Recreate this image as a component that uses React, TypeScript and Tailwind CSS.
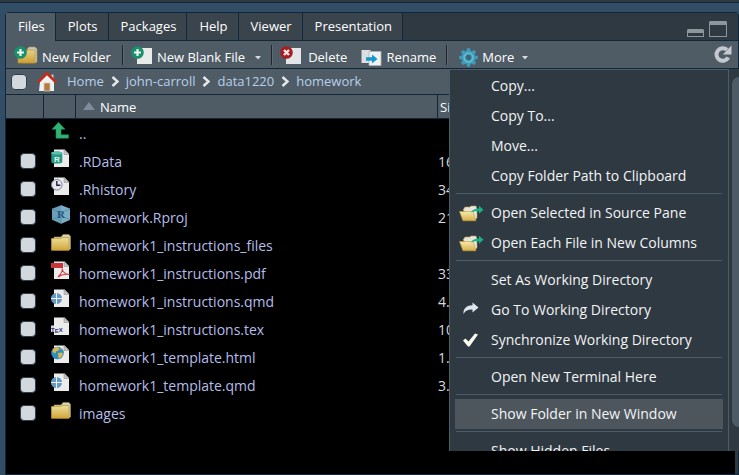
import type { ReactNode } from "react";

const Badge = () => (
  <g>
    <circle cx="6.500" cy="6.500" r="6.300" fill="#18906a" />
    <path d="M6.500 3v7M3 6.500h7" stroke="#eef6f2" strokeWidth="2.200" />
  </g>
);

const NewFolderIcon = () => (
  <svg width="24" height="20" viewBox="0 0 24 20" aria-hidden="true">
    <defs>
      <linearGradient id="nf" x1="0" y1="0" x2="0" y2="1">
        <stop offset="0" stopColor="#e6d38a" />
        <stop offset="1" stopColor="#cf9e30" />
      </linearGradient>
    </defs>
    <path d="M13 3.5l2-2.500h6l2 2V16l-2 1H8z" fill="#c9c6b4" stroke="#a89858" strokeWidth=".6" />
    <path d="M4 5h9l1-1h7v13H4z" fill="url(#nf)" stroke="#b8902c" strokeWidth=".6" />
    <Badge />
  </svg>
);

const NewFileIcon = () => (
  <svg width="22" height="20" viewBox="0 0 22 20" aria-hidden="true">
    <path d="M6 2h15v16H6z" fill="#e9eaea" />
    <Badge />
  </svg>
);

const DeleteIcon = () => (
  <svg width="22" height="20" viewBox="0 0 22 20" aria-hidden="true">
    <path d="M6 2h15v16H6z" fill="#e4e5e6" />
    <circle cx="6.500" cy="6.500" r="6.300" fill="#a51d22" />
    <path d="M4 4l5 5M9 4l-5 5" stroke="#f4e4e4" strokeWidth="2.400" />
  </svg>
);

const RenameIcon = () => (
  <svg width="21" height="18" viewBox="0 0 21 18" aria-hidden="true">
    <path d="M.5 1h9v13h-9z" fill="#dcdedf" />
    <path d="M8 2.500h12v14H8z" fill="#f0f1f1" stroke="#aeb4b9" strokeWidth=".8" />
    <path d="M5 8.300h6V5.500l5.500 4.500-5.500 4.500v-2.800H5z" fill="#1597cf" />
  </svg>
);

const GearIcon = () => (
  <svg width="19" height="19" viewBox="0 0 20 20" aria-hidden="true">
    <g fill="#3e9dbb">
      {[0, 45, 90, 135].map((a) => (
        <path key={a} d="M8.500 .2h3l.7 3v13.600l-.7 3h-3l-.7-3V3.200z" transform={`rotate(${a} 10 10)`} />
      ))}
      <circle cx="10" cy="10" r="7" />
    </g>
    <circle cx="10" cy="10" r="5.500" fill="#62b9d2" />
    <circle cx="10" cy="10" r="2.700" fill="#47606f" stroke="#2b7896" strokeWidth="1.200" />
  </svg>
);

const HomeIcon = () => (
  <svg width="20" height="20" viewBox="0 0 20 20" aria-hidden="true">
    <path d="M3 10l7-7 7 7v9H2z" fill="#eef0f2" />
    <path d="M14.500 2.500h2v5h-2z" fill="#c9ccd0" />
    <path d="M.8 10.500L10 1.300l9.200 9.200" fill="none" stroke="#cc2a16" strokeWidth="2.400" />
    <path d="M7 11h6v8H7z" fill="#b07c46" stroke="#d9c7ae" strokeWidth=".8" />
  </svg>
);

const RefreshIcon = () => (
  <svg width="18" height="19" viewBox="0 0 18 19" aria-hidden="true">
    <path d="M14.300 12.600A6.300 6.300 0 1 1 13 4.800" fill="none" stroke="#c3c9cf" strokeWidth="4" />
    <path d="M17.500 .5v9H8.800z" fill="#c3c9cf" />
  </svg>
);

const Chevron = () => (
  <svg width="9" height="11" viewBox="0 0 9 11" aria-hidden="true">
    <path d="M1.500 1l5 4.500-5 4.500" fill="none" stroke="#e4e8ec" strokeWidth="2.400" />
  </svg>
);

const Caret = () => (
  <svg width="6" height="4" viewBox="0 0 6 4" aria-hidden="true">
    <path d="M0 0h6L3 3.500z" fill="#d5dade" />
  </svg>
);

const MinimizeIcon = () => (
  <svg width="17" height="8" viewBox="0 0 17 8" aria-hidden="true">
    <path d="M1 0h15l1 1v7H0V1z" fill="#8b979c" />
    <path d="M1 4h15v3H1z" fill="#2f3941" />
  </svg>
);

const MaximizeIcon = () => (
  <svg width="18" height="16" viewBox="0 0 18 16" aria-hidden="true">
    <path d="M1 0h16l1 1v15H0V1z" fill="#8b979c" />
    <path d="M1 4h16v11H1z" fill="#2f3941" />
  </svg>
);

const UpIcon = () => (
  <svg width="18" height="17" viewBox="0 0 18 17" aria-hidden="true">
    <path d="M7.500 .3l6.500 7h-4v5.500h7.500v3.400H5V7.300H1z" fill="#2fb573" stroke="#1d8a55" strokeWidth=".6" />
  </svg>
);

const FolderIcon = () => (
  <svg width="20" height="17" viewBox="0 0 20 17" aria-hidden="true">
    <defs>
      <linearGradient id="fo" x1="0" y1="0" x2="0" y2="1">
        <stop offset="0" stopColor="#ecdf9a" />
        <stop offset="1" stopColor="#d2a53a" />
      </linearGradient>
    </defs>
    <path d="M3 3h7l2-2.500h6l1.500 2V15l-2 1H3z" fill="#d5d0b4" stroke="#9c9050" strokeWidth=".6" />
    <path d="M.4 4.500h9.200l1.400-1h7v12.800H.4z" fill="url(#fo)" stroke="#c2952c" strokeWidth=".7" />
  </svg>
);

const Page = ({ children }: { children?: ReactNode }) => (
  <svg width="20" height="19" viewBox="0 0 20 19" aria-hidden="true">
    <path d="M3 .5h10.500l4.500 4.500v13H3z" fill="#ececec" />
    <path d="M13 .5l5 5h-5z" fill="#c2c2c2" stroke="#8d8d8d" strokeWidth=".5" />
    {children}
  </svg>
);

const RDataIcon = () => (
  <Page>
    <path d="M.3 4c0-2 11-2 11 0v9c0 2-11 2-11 0z" fill="#259a86" />
    <ellipse cx="5.800" cy="4" rx="5.500" ry="1.500" fill="#5dbfae" />
    <text x="3" y="12.500" fontSize="8" fontWeight="700" fill="#e8f6f3" className="font-['Liberation_Sans',sans-serif]">R</text>
  </Page>
);

const HistoryIcon = () => (
  <Page>
    <circle cx="5.800" cy="7.800" r="5.300" fill="#e6e6f0" stroke="#84849a" strokeWidth="1" />
    <path d="M5.800 4v4.300h3.500" fill="none" stroke="#24243c" strokeWidth="1.400" />
  </Page>
);

const ProjIcon = () => (
  <svg width="20" height="19" viewBox="0 0 20 19" aria-hidden="true">
    <path d="M10 .3l9 3.500v11L10 18.700 1 14.800v-11z" fill="#6a9fb9" />
    <path d="M10 .3l9 3.500v11L10 18.700z" fill="#7badc4" />
    <path d="M1 4l9 3.500L19 4M10 7.500V18M1 14.500l9-3.500 9 3.500" fill="none" stroke="#5286a4" strokeWidth=".7" />
    <text x="6" y="12.500" fontSize="11" fontWeight="700" fill="#245780" className="font-['Liberation_Serif',serif]">R</text>
  </svg>
);

const PdfIcon = () => (
  <Page>
    <path d="M0 2h12v5H0z" fill="#c8343a" />
    <path d="M7 16c3-3 5-6 4-8.500M11 7.500c.5 3 3 5.500 7.500 6M7 16c3-2.500 7-3.300 11.500-2.500" fill="none" stroke="#cf3a40" strokeWidth="1.100" />
  </Page>
);

const QmdIcon = () => (
  <Page>
    <circle cx="5.500" cy="9.500" r="5.500" fill="#6699c4" />
    <path d="M5.500 4v11M0 9.500h11" stroke="#e9f0f6" strokeWidth="1" />
  </Page>
);

const TexIcon = () => (
  <Page>
    <path d="M0 8.500h3v6.500H0z" fill="#d4d4e2" />
    <text x="0" y="14.500" fontSize="6" fontWeight="700" fill="#33307e" className="font-['Liberation_Sans',sans-serif]">
      T<tspan dy="1.500">E</tspan><tspan dy="-1.500">X</tspan>
    </text>
  </Page>
);

const HtmlIcon = () => (
  <Page>
    <circle cx="6.500" cy="8" r="6.300" fill="#2a8fc0" />
    <path d="M2 4l3.500-2 3 1-1 2.500-2.500 1-.5 2L1.500 7zM7 8l4-.5 1 2-2.500 3.500-2 .8zM9 2.500l2 1.500-1 1.500z" fill="#e0b64c" />
  </Page>
);

const OpenFolderIcon = () => (
  <svg width="25" height="17" viewBox="0 0 25 17" aria-hidden="true">
    <defs>
      <linearGradient id="of" x1="0" y1="0" x2="0" y2="1">
        <stop offset="0" stopColor="#f6eab0" />
        <stop offset="1" stopColor="#d8b04a" />
      </linearGradient>
    </defs>
    <path d="M4 5l2-3h5l1-1h5l1 3v9l-3 2.500z" fill="#e8e6dc" stroke="#b89c48" strokeWidth=".6" />
    <path d="M.5 6.500H14l3 9.300H4z" fill="url(#of)" stroke="#c49a35" strokeWidth=".6" />
    <path d="M12 7.500c1.500-3 4-4 8-4V.8l4.500 4-4.500 4V6.300c-3-.3-5.500 0-8 1.200z" fill="#18b089" />
  </svg>
);

const GoIcon = () => (
  <svg width="16" height="17" viewBox="0 0 16 17" aria-hidden="true">
    <path d="M.5 12C0 6 4 3.200 9.500 3.200V.5l6 5-6 5V7.600C5.500 7.400 2.500 8.500.5 12z" fill="#dfe5ee" />
  </svg>
);

const CheckIcon = () => (
  <svg width="16" height="14" viewBox="0 0 16 14" aria-hidden="true">
    <path d="M0 7.500l2.500-2 3 3L12 .5l3 1L6.500 13.500H5z" fill="#fdfdf2" />
  </svg>
);

const tabs = ["Files", "Plots", "Packages", "Help", "Viewer", "Presentation"];
const crumbs = ["Home", "john-carroll", "data1220", "homework"];

const files = [
  { name: ".RData", size: "16 KB", icon: <RDataIcon /> },
  { name: ".Rhistory", size: "34 B", icon: <HistoryIcon /> },
  { name: "homework.Rproj", size: "218 B", icon: <ProjIcon /> },
  { name: "homework1_instructions_files", size: "", icon: <FolderIcon /> },
  { name: "homework1_instructions.pdf", size: "33 KB", icon: <PdfIcon /> },
  { name: "homework1_instructions.qmd", size: "4.1 KB", icon: <QmdIcon /> },
  { name: "homework1_instructions.tex", size: "10 KB", icon: <TexIcon /> },
  { name: "homework1_template.html", size: "1.2 MB", icon: <HtmlIcon /> },
  { name: "homework1_template.qmd", size: "3.1 KB", icon: <QmdIcon /> },
  { name: "images", size: "", icon: <FolderIcon /> },
];

type Item = { label: string; icon?: ReactNode; active?: boolean };
const menuGroups: Item[][] = [
  [{ label: "Copy..." }, { label: "Copy To..." }, { label: "Move..." }, { label: "Copy Folder Path to Clipboard" }],
  [
    { label: "Open Selected in Source Pane", icon: <OpenFolderIcon /> },
    { label: "Open Each File in New Columns", icon: <OpenFolderIcon /> },
  ],
  [
    { label: "Set As Working Directory" },
    { label: "Go To Working Directory", icon: <GoIcon /> },
    { label: "Synchronize Working Directory", icon: <CheckIcon /> },
  ],
  [{ label: "Open New Terminal Here" }],
  [{ label: "Show Folder in New Window", active: true }],
  [{ label: "Show Hidden Files" }],
];

const Check = ({ label }: { label: string }) => (
  <input
    type="checkbox"
    aria-label={label}
    className="block size-4 shrink-0 appearance-none rounded-sm border border-[#2c3f50] bg-[#d3d8dd]"
  />
);

const Divider = () => <div className="h-5 w-px shrink-0 self-start bg-[#1c252d] shadow-[1px_0_0_#5d6871]" />;

function MoreMenu() {
  return (
    <div className="absolute top-7 -right-px left-[443px] flex h-[382px] overflow-hidden border-l border-[#4c5c69] bg-[#2f3941]">
      <div role="menu" className="h-full flex-1 overflow-hidden border-t border-r border-[#4c5c69] px-[5px] pt-px">
        {menuGroups.map((group, g) => (
          <div key={g}>
            {g > 0 && <div role="separator" className="mx-px mt-0.5 mb-1 h-px bg-[#4c5c69]" />}
            {group.map((item) => (
              <button
                key={item.label}
                role="menuitem"
                className={`flex h-[30px] w-full items-center text-left text-sm whitespace-nowrap text-[#f2f4f5] ${item.active ? "bg-[#4e565d]" : ""}`}
              >
                <span className="flex w-9 shrink-0 items-center justify-center pr-1">{item.icon}</span>
                {item.label}
              </button>
            ))}
          </div>
        ))}
      </div>
      <div className="w-2.5 shrink-0 pt-2 pb-6 pl-[3px]">
        <div className="h-full rounded-l-lg bg-[#4d5b67]" />
      </div>
    </div>
  );
}

export default function App() {
  return (
    <div className="flex h-screen flex-col overflow-hidden bg-[#324d66] font-['Open_Sans','Noto_Sans',sans-serif] text-[13px] text-white">
      <div className="h-[3px] shrink-0 border-b border-[#12263a] bg-[#2f3941]" />
      <section className="mt-[9px] ml-[5px] flex min-h-0 flex-1 flex-col rounded-t border border-[#12263a] bg-black">
        <div className="flex h-7 shrink-0 items-stretch border-b border-[#12263a] bg-[#2f3941]">
          <div role="tablist" className="flex">
            {tabs.map((tab, i) => (
              <button
                key={tab}
                role="tab"
                aria-selected={i === 0}
                className={`border-r border-[#12263a] pr-2.5 pl-3 ${i === 0 ? "-mb-px bg-[#4f5c66]" : "bg-[#3a444c]"}`}
              >
                {tab}
              </button>
            ))}
          </div>
          <div className="ml-auto flex items-end gap-[5px] pr-[11px] pb-[3px]">
            <button aria-label="Minimize"><MinimizeIcon /></button>
            <button aria-label="Maximize"><MaximizeIcon /></button>
          </div>
        </div>

        <div className="relative z-10 flex h-7 shrink-0 items-center border-b border-[#12263a] bg-[#4f5c66] pl-2 whitespace-nowrap">
          <button className="flex items-center gap-1 pt-1.5">
            <span className="pb-1"><NewFolderIcon /></span>
            New Folder
          </button>
          <div className="ml-[11px]"><Divider /></div>
          <button className="ml-2 flex items-center gap-1 pt-1.5">
            <span className="pb-1"><NewFileIcon /></span>
            New Blank File
          </button>
          <button aria-label="New file options" className="ml-2.5 pt-1.5"><Caret /></button>
          <div className="ml-2.5"><Divider /></div>
          <button className="ml-2 flex items-center gap-1.5 pt-1.5">
            <span className="pb-1"><DeleteIcon /></span>
            Delete
          </button>
          <button className="ml-3.5 flex items-center gap-1 pt-1.5">
            <RenameIcon />
            Rename
          </button>
          <div className="ml-2.5"><Divider /></div>
          <button className="ml-3 flex items-center gap-1 pt-1.5" aria-haspopup="menu">
            <GearIcon />
            More
            <span className="ml-1"><Caret /></span>
          </button>
          <button aria-label="Refresh" className="mr-1.5 ml-auto"><RefreshIcon /></button>
          <MoreMenu />
        </div>

        <nav aria-label="Path" className="flex h-[26px] shrink-0 items-center border-b border-[#12263a] bg-[#4f5c66] pl-[5px]">
          <Check label="Select all files" />
          <span className="mr-2.5 ml-2.5"><HomeIcon /></span>
          {crumbs.map((crumb, i) => (
            <span key={crumb} className="flex items-center">
              {i > 0 && <span className="mr-1.5 ml-[7px]"><Chevron /></span>}
              <a href="#" className="text-[#b7d0ea]">{crumb}</a>
            </span>
          ))}
        </nav>

        <table className="w-full table-fixed border-separate border-spacing-0 text-left">
          <colgroup>
            <col className="w-[38px]" />
            <col className="w-8" />
            <col className="w-[361px]" />
            <col />
          </colgroup>
          <thead>
            <tr className="h-6 bg-[#4f5c66]">
              <th className="border-r border-b border-[#12263a] p-0" />
              <th className="border-r border-b border-[#12263a] p-0" />
              <th className="border-b border-[#12263a] pt-0.5 pr-0 pb-0 pl-[7px] font-normal">
                <span className="flex items-center gap-[5px]">
                  <svg width="12" height="12" viewBox="0 0 12 12" aria-hidden="true">
                    <path d="M6 0l6 8H0z" fill="#7f8a9c" />
                  </svg>
                  Name
                </span>
              </th>
              <th className="border-b border-l border-[#12263a] pt-0.5 pr-0 pb-0 pl-0.5 font-normal">Size</th>
            </tr>
          </thead>
          <tbody className="text-sm text-[#b4bdea]">
            <tr className="h-7">
              <td className="p-0" />
              <td className="pt-0 pr-0 pb-1.5 pl-[7px]"><UpIcon /></td>
              <td className="pt-0.5 pr-0 pb-0 pl-[3px]"><a href="#">..</a></td>
              <td className="p-0" />
            </tr>
            {files.map((file) => (
              <tr key={file.name} className="h-7">
                <td className="py-0 pr-0 pl-3.5"><Check label={file.name} /></td>
                <td className="pt-0 pr-0 pb-1.5 pl-[7px]">{file.icon}</td>
                <td className="pt-0.5 pr-0 pb-0 pl-[3px]"><a href="#">{file.name}</a></td>
                <td className="truncate pt-0.5 pr-0 pb-0 pl-px text-[#d5dade]">{file.size}</td>
              </tr>
            ))}
          </tbody>
        </table>
        <div className="ml-auto w-[3px] flex-1 bg-[#2f3941]" />
      </section>
    </div>
  );
}
